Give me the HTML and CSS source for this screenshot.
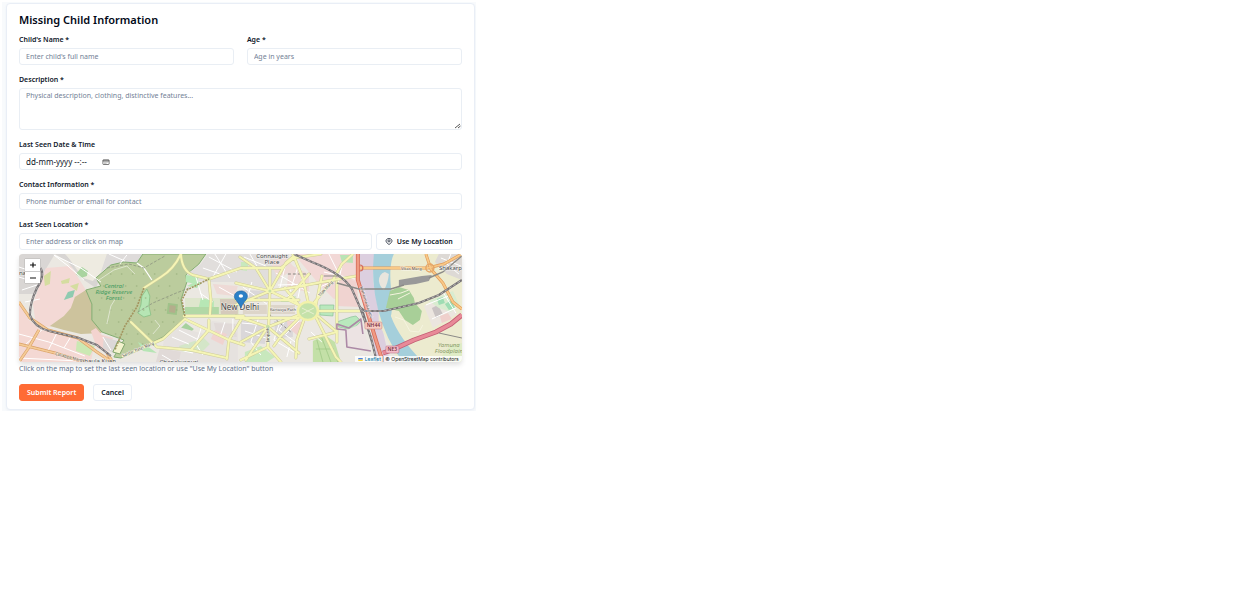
FILE: index.html
```html
<!DOCTYPE html>
<html lang="en">
<head>
<meta charset="utf-8">
<meta name="viewport" content="width=device-width, initial-scale=1">
<title>Missing Child Information</title>
<link rel="stylesheet" href="styles.css">
</head>
<body>
<main class="page">
  <form class="card">
    <h1 class="title">Missing Child Information</h1>
    <div class="pair">
      <div class="field">
        <label class="label" for="name">Child's Name *</label>
        <input class="input" id="name" type="text" placeholder="Enter child's full name">
      </div>
      <div class="field">
        <label class="label" for="age">Age *</label>
        <input class="input" id="age" type="text" inputmode="numeric" placeholder="Age in years">
      </div>
    </div>
    <div class="field">
      <label class="label" for="description">Description *</label>
      <div class="area-wrap">
        <textarea class="input area" id="description" placeholder="Physical description, clothing, distinctive features..."></textarea>
        <svg class="grip" viewBox="0 0 7 6" aria-hidden="true"><path d="M1 5 6 1M4 5 6.500 3" fill="none" stroke="#444" stroke-width=".9"/></svg>
      </div>
    </div>
    <div class="field">
      <label class="label" for="seen">Last Seen Date &amp; Time</label>
      <div class="input date">
        <input class="date-text" id="seen" type="text" value="dd-mm-yyyy --:--">
        <button class="date-button" type="button" aria-label="Open calendar">
          <svg viewBox="0 0 8 6" aria-hidden="true"><rect x=".9" y=".8" width="6.2" height="4.7" rx=".6" fill="#fff" stroke="#444" stroke-width=".7"/><path d="M.9 1.9h6.2" stroke="#444" stroke-width=".9"/><path d="M2 3.1h4M2 4.3h2.6" stroke="#777" stroke-width=".5"/></svg>
        </button>
      </div>
    </div>
    <div class="field">
      <label class="label" for="contact">Contact Information *</label>
      <input class="input" id="contact" type="text" placeholder="Phone number or email for contact">
    </div>
    <div class="field">
      <label class="label" for="location">Last Seen Location *</label>
      <div class="location-row">
        <input class="input" id="location" type="text" placeholder="Enter address or click on map">
        <button class="button locate" type="button">
          <svg class="locate-icon" viewBox="0 0 8 7" aria-hidden="true"><path d="M4 6.500C2.500 5.500 1 4.300 1 2.900 1 1.500 2.300.5 4 .5s3 1 3 2.400C7 4.300 5.500 5.500 4 6.500Z" fill="none" stroke="#222b3b" stroke-width=".8"/><ellipse cx="4" cy="2.900" rx="1.200" ry="1" fill="none" stroke="#222b3b" stroke-width=".8"/></svg>
          Use My Location
        </button>
      </div>
      <div class="map">
        <svg class="map-canvas" viewBox="0 0 443 108" preserveAspectRatio="xMidYMid slice" role="img" aria-label="Map of New Delhi">
          <rect width="443" height="108" fill="#ebe8e2"/>
          <!-- built-up and institutional areas -->
          <path d="M0 0H36L24 20 18 40H0Z" fill="#d9d6d4"/>
          <path d="M27 14 52 12 67 36 57 55 45 62 31 73 17 70 14 50Z" fill="#f3d9d5"/>
          <path d="M0 50 10 66 22 76 58 82 75 92 72 108H0Z" fill="#f4d8d3"/>
          <path d="M36 0 48 7 62 24 77 34 80 27 60 14 46 0Z" fill="#d8d5d3"/>
          <path d="M47 0H88L82 18 74 27 64 24Z" fill="#eeebe1"/>
          <path d="M88 0H124L118 9 105 8 92 11 82 18Z" fill="#dedbda"/>
          <path d="M57 20 63 13 69 17 68 22 62 24Z" fill="#a9d4a0"/>
          <path d="M25 22 32 17 31 30 26 32ZM42 27 51 24 50 29 43 30ZM51 32 60 29 58 37Z" fill="#d5dda0"/>
          <path d="M49 38 56 36 54 43 45 46Z" fill="#8fcbb0"/>
          <path d="M67 36 73 50 77 65 83 79 62 80 45 76 31 72 45 62 52 54 56 43Z" fill="#cdc39d"/>
          <path d="M58 87 76 92 71 102 57 97Z" fill="#cbe8b3"/>
          <path d="M72 77 77 74 83 81 94 84 90 97 78 94Z" fill="#f3d3cf"/>
          <path d="M85 83 102 88 94 99 84 94Z" fill="#dcd8d7"/>
          <!-- ridge forest -->
          <path d="M77 24 92 11 105 8 118 9 124 0H187L180 10 167 21 168 28 162 46 166 64 144 83 102 104 95 103 105 86 83 78 73 66 73 50 67 36 82 32Z" fill="#bbcc9d" stroke="#83ad72" stroke-width="1"/>
          <path d="M123 42 128 35 131 42 130 52 132 61 125 63 119 59 122 51Z" fill="#b6e5b4" stroke="#7fbb80" stroke-width=".7"/>
          <path d="M119 88 131 94 138 99 124 97Z" fill="#b6e5b4"/>
          <path d="M150 50 158 51 157 60 149 59Z" fill="#b4ad8c" stroke="#a0c28a" stroke-width="2"/>
          <path d="M99 87 106 90 101 100 94 98Z" fill="#f3f2cd" stroke="#81a56c"/>
          <g fill="none" stroke="#98ad7d" stroke-width="1.200" stroke-dasharray="1.500 9.500">
            <path d="M91 20H162M84 32H160M82 44H160M80 56H160M88 68H158M96 80H140M112 90H128"/>
          </g>
          <path d="M80 26 95 16 108 12 116 20M88 70 92 52 97 44M134 80 141 72 136 66" fill="none" stroke="#dfe6cf" stroke-width="1"/>
          <path d="M118 9 125 14 133 26" fill="none" stroke="#fff" stroke-width="1.200"/>
          <path d="M88 14 110 10 125 14 146 2M119 58 134 49 155 40 170 34" fill="none" stroke="#8d9480" stroke-width=".8" stroke-dasharray="3 1.500"/>
          <!-- central district -->
          <path d="M189 0H270L271 16 250 35 221 28 190 28 168 26 168 20 182 10Z" fill="#e1dedc"/>
          <path d="M166 44H220V64H167Z" fill="#dee6cd"/>
          <path d="M168 32 178 27 183 29 178 34ZM182 44 195 47V57H179ZM167 21 180 23 177 30 167 28Z" fill="#b7e7b5"/>
          <path d="M166 53H200V60H166Z" fill="#b2d8a6"/>
          <path d="M201 45H219V60H202Z" fill="#d5cabb"/>
          <path d="M160 76 167 69 175 75 170 80Z" fill="#a6d19e"/>
          <path d="M145 87 160 73 185 80 193 67 219 70V108H140Z" fill="#e6e2df"/>
          <path d="M195 69 216 70 218 83 198 81ZM141 94 162 98 160 108H137Z" fill="#e1dad8"/>
          <path d="M160 92 185 84 191 90 183 98 164 98Z" fill="#d4e6c8"/>
          <path d="M222 36 250 37V46H222ZM222 66 249 74 246 90 222 88ZM255 67 274 67 274 83 257 84Z" fill="#dad7d9"/>
          <path d="M194 30 219 32 216 42 198 40ZM251 6 267 4 276 14 259 26ZM270 10 290 20 290 38 268 34Z" fill="#eedad6"/>
          <path d="M275 0H338V40L315 45 300 30Z" fill="#f2d8d6"/>
          <path d="M316 20 337 28 341 53 318 52ZM268 67 286 68 280 83 269 73ZM196 76 208 80 204 91 192 85Z" fill="#f0d3d0"/>
          <path d="M321 1H334V9L323 8Z" fill="#b9e4b5"/>
          <path d="M226 98 242 92 256 103 248 108H226ZM222 8 230 8 228 17 222 16ZM262 45 277 42 276 48H262Z" fill="#c8e8bd"/>
          <path d="M224 51H248V60H224ZM252 51H276V60H252Z" fill="#ddd5c9"/>
          <path d="M301 51 315 51 314 62 301 61ZM318 68 332 63 337 62 342 67 334 76 320 73Z" fill="#b9e8bd" stroke="#8bc297" stroke-width=".7"/>
          <path d="M294 87 306 81 316 88 322 108H294Z" fill="#c3e0a7"/>
          <path d="M298 86 304 108M303 84 312 108M308 84 319 108M297 95H315" stroke="#9bc582" stroke-width=".7" fill="none"/>
          <path d="M328 76 342 70 352 96 328 93Z" fill="#ece3e3"/>
          <path d="M340 0H356L354 26 360 59 371 108H358L350 63 340 30Z" fill="#dccfdf"/>
          <!-- east bank and river -->
          <path d="M366 0H443V108H380L360 70 359 30Z" fill="#ecebcf"/>
          <path d="M355 0H375Q370 10 372 33T372 62Q380 84 404 108H384Q367 86 359 55 352 26 355 0Z" fill="#a5cfdb"/>
          <path d="M366 18Q360 20 360 27 361 33 365 36 369 30 370 20Z" fill="#e9e5dd"/>
          <path d="M371 37 380 33 390 36 395 44 396 49 403 57 401 66 394 71 386 66 380 57 367 54Z" fill="#a8cf98"/>
          <path d="M380 26 403 22 413 21 410 27 397 30 380 32Z" fill="#999"/>
          <path d="M405 52 428 38 438 60 414 74Z" fill="#ebe5df"/>
          <path d="M413 54 419 51 424 60 417 64Z" fill="#c9c3c3"/>
          <path d="M421 62 429 59 433 65 423 69Z" fill="#efd0cc"/>
          <path d="M410 47 434 37 440 50 432 58 420 54Z" fill="#d9ecd0"/>
          <path d="M418 45 424 43 426 49 420 51ZM426 50 433 46 436 54 430 56Z" fill="#9fddb4"/>
          <path d="M420 0H443V26L428 20 416 8Z" fill="#ddd9d5"/>
          <path d="M371 41 382 39 390 36M379 45 391 39M376 63 385 66 391 77 400 78 404 71" fill="none" stroke="#f5f4df"/>
          <path d="M425 98 432 91 443 89V108H420Z" fill="#dfecc6"/>
          <!-- minor streets -->
          <g fill="none" stroke="#fff" stroke-width="1">
            <path d="M0 13 12 17 24 15M0 23 16 28M3 36 18 31M6 48 21 45M35 1 48 11 65 26M35 1 62 14 82 28M0 80 30 88 66 102M5 92 24 75M28 99 39 77M45 94 53 81M17 95 47 103M0 104 60 107M84 83 92 96M90 0 106 7M101 10 108 1"/>
            <path d="M190 3 218 18M196 0 211 24M184 14 204 21 218 17M207 0 194 23M200 33 216 42M181 39 194 48M177 23 184 46M183 72 177 90 184 101M147 93 174 99M153 83 170 90M160 76 178 85M143 101 155 108M206 68 201 83M214 65V82"/>
            <path d="M225 3 247 12M224 15H240M231 0 238 12M257 19 291 39M267 9 261 34M279 13 268 47M259 31 292 30M283 25 278 49M224 33 248 50M233 28 228 46M240 63 232 88 242 101M223 69 246 71M226 77 247 84M262 65 255 86 275 98M269 63 260 76 279 90M280 67 267 80M272 87 268 103M292 78 303 88M301 33 317 26M310 0 323 26M323 12 318 35M305 18 336 25"/>
            <path d="M422 4 442 12M432 0 428 10 440 20M407 51 432 41M413 65 437 54M424 38 437 59"/>
          </g>
          <path d="M269 20 293 20M250 60 272 78" stroke="#898780" stroke-width="1" stroke-dasharray="3 2" fill="none"/>
          <!-- main avenues -->
          <g fill="none" stroke-linecap="round" stroke-linejoin="round">
            <g id="avenues" stroke="#cfcd9a" stroke-width="3">
              <path d="M162 0Q155 15 142 23L125 34M162 0Q163 17 174 21L190 25 192 46 191 61M190 25 222 14 237 14M112 68 138 93 172 96 208 104M104 102 144 85 166 65M165 62H225M166 65 210 86 225 91M190 66 190 76 172 96M208 105 210 86 222 66"/>
              <path d="M221 3 237 14 251 37 251 14M217 29 251 37 267 9 275 2M251 37 249 93M251 37 280 51M251 37 277 33 314 26 338 22M217 51 251 37M217 46H280M217 64H280M249 73 280 61M249 73 227 106M249 73 280 99M249 73 222 88M249 73 217 62M249 93 222 106M249 93 262 108M274 0 284 24 289 47M290 20 268 46M237 14 262 14 275 4 302 0M279 50 266 34M295 49 314 26 323 10 334 0M299 57H341M297 63 317 103 322 108M285 66 278 86 277 104M281 63 262 82 255 92M297 51 303 22M318 28V88M299 62 318 78 290 85"/>
            </g>
            <g stroke="#f5f5b5" stroke-width="2">
              <path d="M162 0Q155 15 142 23L125 34M162 0Q163 17 174 21L190 25 192 46 191 61M190 25 222 14 237 14M112 68 138 93 172 96 208 104M104 102 144 85 166 65M165 62H225M166 65 210 86 225 91M190 66 190 76 172 96M208 105 210 86 222 66"/>
              <path d="M221 3 237 14 251 37 251 14M217 29 251 37 267 9 275 2M251 37 249 93M251 37 280 51M251 37 277 33 314 26 338 22M217 51 251 37M217 46H280M217 64H280M249 73 280 61M249 73 227 106M249 73 280 99M249 73 222 88M249 73 217 62M249 93 222 106M249 93 262 108M274 0 284 24 289 47M290 20 268 46M237 14 262 14 275 4 302 0M279 50 266 34M295 49 314 26 323 10 334 0M299 57H341M297 63 317 103 322 108M285 66 278 86 277 104M281 63 262 82 255 92M297 51 303 22M318 28V88M299 62 318 78 290 85"/>
            </g>
          </g>
          <ellipse cx="289" cy="57" rx="10" ry="9" fill="#c5e2aa" stroke="#f2f1aa" stroke-width="2.500"/>
          <path d="M283 54 295 60M283 60 295 54" stroke="#e8f0d0" stroke-width="1"/>
          <circle cx="251" cy="37" r="1.500" fill="#c6dfa4"/><circle cx="249" cy="73" r="2" fill="#c6dfa4"/><circle cx="190" cy="25" r="1.500" fill="#c6dfa4"/>
          <path d="M166 62 163 46 168 36 190 25M125 34 118 53 106 72 96 96" fill="none" stroke="#a3945f" stroke-width="1.600" stroke-dasharray="2 1"/>
          <!-- trunk roads -->
          <g fill="none" stroke-linejoin="round">
            <path d="M0 48 11 64 29 76 59 84 78 98 93 108M0 90 36 99 65 108M20 76 9 95 0 108M88 99 94 108" stroke="#d9a066" stroke-width="3"/>
            <path d="M0 48 11 64 29 76 59 84 78 98 93 108M0 90 36 99 65 108M20 76 9 95 0 108M88 99 94 108" stroke="#f5cb96" stroke-width="1.800"/>
            <path d="M338 14H362L409 14 425 10 443 0M407 0 412 15 424 29 434 48 443 55" stroke="#df9958" stroke-width="3"/>
            <path d="M338 14H362L409 14 425 10 443 0M407 0 412 15 424 29 434 48 443 55" stroke="#f9c987" stroke-width="1.800"/>
            <circle cx="411" cy="14" r="4" stroke="#e6a767" stroke-width="1.500"/>
            <circle cx="341" cy="14" r="3" stroke="#d56d5a" stroke-width="1.200"/>
            <path d="M339 0V26L350 63 357 86 364 108" stroke="#d56d5a" stroke-width="4"/>
            <path d="M339 0V26L350 63 357 86 364 108" stroke="#f09a82" stroke-width="2.400"/>
            <path d="M364 99 373 96 395 86 417 78 432 70 443 61" stroke="#c55f74" stroke-width="5"/>
            <path d="M364 99 373 96 395 86 417 78 432 70 443 61" stroke="#e88a98" stroke-width="3.400"/>
            <path d="M352 97 328 93 327 76 318 75 318 70 330 74 342 65 344 80" stroke="#ac89a6" stroke-width="1.600"/>
          </g>
          <!-- railways -->
          <g fill="none">
            <path d="M22 14Q26 23 18 34 11 49 11 61 15 73 30 77L60 84 78 91 92 102M275 0 293 8Q324 20 333 35L341 53 352 83 358 108M341 53 346 57 365 57 400 49 420 41 443 26M344 58 354 91" stroke="#777477" stroke-width="2.200"/>
            <path d="M22 14Q26 23 18 34 11 49 11 61 15 73 30 77L60 84 78 91 92 102M275 0 293 8Q324 20 333 35L341 53 352 83 358 108M341 53 346 57 365 57 400 49 420 41 443 26" stroke="#c9c4c3" stroke-width=".8" stroke-dasharray="3 2"/>
            <path d="M318 29 340 35 372 35 385 31M410 24 424 18 443 2" stroke="#8b8a87" stroke-width="1.400"/>
            <path d="M420 79 443 84M305 22H322" stroke="#8b8a87" stroke-width="1"/>
          </g>
          <!-- place names -->
          <g class="map-text">
            <g class="park-text" text-anchor="middle"><text x="95" y="34">Central</text><text x="95" y="40">Ridge Reserve</text><text x="95" y="46">Forest</text></g>
            <g class="place-text" text-anchor="middle"><text x="253" y="4">Connaught</text><text x="253" y="10">Place</text><text x="79" y="109">Dhaula Kuan</text><text x="160" y="110">Chanakyapuri</text></g>
            <text class="place-text" x="420" y="16">Shakarpur</text><text class="place-text" x="0" y="21">na</text>
            <text class="city-text" x="221" y="56" text-anchor="middle">New Delhi</text>
            <g class="road-text"><text x="251" y="57">Kartavya Path</text><text x="382" y="16">Vikas Marg</text><text transform="translate(301 43) rotate(-48)">Tilak Marg</text><text transform="translate(250 88) rotate(-90)">Janpath</text><text transform="translate(36 101) rotate(14)">Cariappa Marg</text><text transform="translate(104 103) rotate(-22)">Sardar Patel Marg</text><text transform="translate(341 33) rotate(72)">Mahatma Gandhi</text></g>
            <g class="river-text" text-anchor="middle"><text x="430" y="93">Yamuna</text><text x="430" y="99">Floodplain</text></g>
          </g>
          <g class="shield-text" text-anchor="middle">
            <rect x="346" y="68" width="17" height="7" rx="1" fill="#f7cdc3" stroke="#c47f77" stroke-width=".5"/><text x="354.500" y="73">NH44</text>
            <rect x="367" y="92" width="13" height="7" rx="1" fill="#f4bdc9" stroke="#b4667c" stroke-width=".5"/><text x="373.500" y="97">NE3</text>
          </g>
          <!-- location pin -->
          <path d="M222 54C220 48 215.500 46 215.500 42.500 215.500 39.500 218 37 222 37s6.500 2.500 6.500 5.500C228.500 46 224 48 222 54Z" fill="#2c80c7" stroke="#2566a4" stroke-width=".7"/>
          <ellipse cx="222" cy="42" rx="2.200" ry="1.800" fill="#fff"/>
        </svg>
        <div class="zoom">
          <button class="zoom-button" type="button" aria-label="Zoom in"><svg viewBox="0 0 8 6" aria-hidden="true"><path d="M1 3h6M4 .5v5" stroke="#111" stroke-width="1.200"/></svg></button>
          <button class="zoom-button" type="button" aria-label="Zoom out"><svg viewBox="0 0 8 6" aria-hidden="true"><path d="M1 3h6" stroke="#111" stroke-width="1.200"/></svg></button>
        </div>
        <div class="credit"><svg class="flag" viewBox="0 0 6 4" aria-hidden="true"><path fill="#4b82df" d="M0 0h6v2H0z"/><path fill="#f4d23c" d="M0 2h6v2H0z"/></svg> <a class="credit-link" href="#leaflet">Leaflet</a> | © OpenStreetMap contributors</div>
      </div>
      <p class="help">Click on the map to set the last seen location or use "Use My Location" button</p>
    </div>
    <div class="actions">
      <button class="button primary" type="submit">Submit Report</button>
      <button class="button" type="button">Cancel</button>
    </div>
  </form>
</main>
</body>
</html>
```
FILE: styles.css
```css
* { box-sizing: border-box; }
body { margin: 0; background: #fff; color: #0f172a; font-family: "Noto Sans", "Open Sans", sans-serif; font-size: 7px; line-height: 10px; }
button, input, textarea { font: inherit; color: inherit; }
.page { width: 37.6%; min-width: 320px; margin: 2px 0 0 2px; padding: 1px 1px 1px 4px; background: #f8fafc; }
.card { padding: 8px 12px; border: 1px solid #e9eef6; border-radius: 4px; background: #fff; box-shadow: 0 1px 2px #e2e8f066; display: flex; flex-direction: column; gap: 10px; }
.title { margin: 0 0 -3px; color: #020817; font-size: 11px; line-height: 15px; padding-bottom: 1px; font-weight: 600; }
.pair { display: grid; grid-template-columns: 1fr 1fr; gap: 13px; }
.field { min-width: 0; }
.label { display: block; margin-bottom: 3px; font-weight: 600; }
.input { display: block; width: 100%; height: 17px; padding: 0 6px; border: 1px solid #e9eef4; border-radius: 3px; background: #fff; outline: none; }
.input::placeholder { color: #738196; opacity: 1; }
.area-wrap { position: relative; }
.area { height: 42px; padding: 2px 6px; resize: none; }
.grip { position: absolute; right: 1px; bottom: 1px; width: 7px; height: 6px; }
.date { display: flex; align-items: center; gap: 8px; }
.date-text { width: 68px; padding: 0; border: 0; background: none; outline: none; font-size: 8px; }
.date-button { display: flex; padding: 0; border: 0; background: none; }
.date-button svg { width: 8px; height: 6px; }
.location-row { display: flex; gap: 4px; }
.location-row .input { flex: 1; min-width: 0; }
.button { height: 17px; padding: 0 7px; border: 1px solid #e9eef6; border-radius: 3px; background: #fff; font-weight: 600; white-space: nowrap; }
.locate { display: flex; align-items: center; justify-content: center; gap: 4px; width: 86px; }
.locate-icon { width: 8px; height: 7px; }
.map { position: relative; height: 108px; margin-top: 4px; overflow: hidden; border-radius: 4px; box-shadow: 0 3px 5px #0000001f; }
.map-canvas { display: block; width: 100%; height: 100%; }
.zoom { position: absolute; left: 6px; top: 5px; width: 15px; box-shadow: 0 0 1px #777; }
.zoom-button { display: flex; align-items: center; justify-content: center; width: 100%; height: 12px; padding: 0; border: 0; background: #fff; }
.zoom-button + .zoom-button { border-top: 1px solid #ccc; }
.zoom-button svg { width: 8px; height: 6px; }
.credit { position: absolute; right: 0; bottom: 0; padding: 0 3px; background: #ffffffcc; color: #222; font-family: Inter, sans-serif; font-size: 5px; line-height: 6px; white-space: nowrap; }
.flag { width: 5px; height: 3px; }
.credit-link { color: #0078a8; text-decoration: none; }
.map-text { font-family: "Noto Sans", sans-serif; fill: #474747; stroke: #ffffff99; stroke-width: 1px; paint-order: stroke; }
.place-text { font-size: 6px; }
.park-text { font-size: 6px; font-style: italic; fill: #429a5d; stroke: none; }
.city-text { font-size: 8px; }
.road-text { font-size: 4px; }
.river-text { font-size: 6px; font-style: italic; fill: #8b9b69; stroke: none; }
.shield-text { font-family: "Noto Sans", sans-serif; font-size: 5px; font-weight: 600; fill: #7b3340; }
.help { margin: 2px 0 0; color: #64748b; }
.actions { display: flex; gap: 9px; }
.primary { border-color: #ff6b35; background: #ff6b35; color: #fff; }
```
